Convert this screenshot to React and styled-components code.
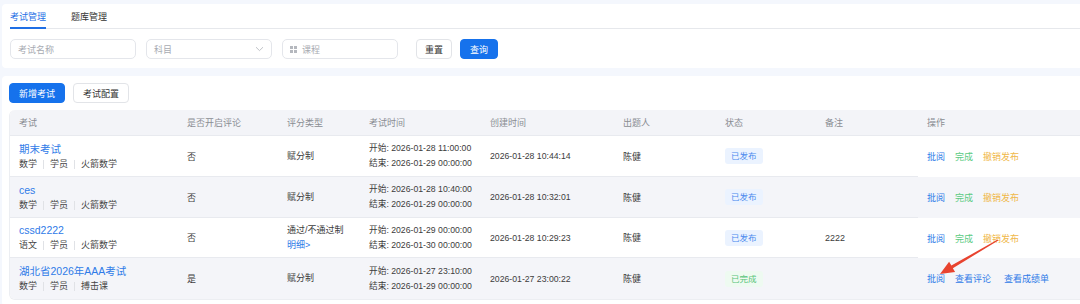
import React from 'react';
import styled, { createGlobalStyle } from 'styled-components';

const GlobalStyle = createGlobalStyle`
    body {
        margin: 0;
        background: #f4f7fd;
        overflow: hidden;
        font-family: "Liberation Sans", "Noto Sans CJK SC", sans-serif;
        color: #333;
    }
`;

const Page = styled.div`
    position: relative;
    width: 1110px;
    padding: 4px 0 0 2px;
`;

const Card = styled.div`
    background: #fff;
    border-radius: 4px;
    padding: ${props => props.pad};
    margin-bottom: 8px;
`;

const Tabs = styled.div`
    display: flex;
    gap: 25px;
    border-bottom: 1px solid #e6e8ec;
`;

const Tab = styled.div`
    height: 25px;
    line-height: 25px;
    font-size: 9px;
    color: ${props => props.active ? '#1f6fe5' : '#333'};
    border-bottom: 2px solid ${props => props.active ? '#1f6fe5' : 'transparent'};
    box-sizing: border-box;
    padding-top: 1px;
    margin-bottom: -1px;
`;

const FilterRow = styled.div`
    display: flex;
    align-items: center;
    padding-top: 10px;
`;

const Field = styled.div`
    width: ${props => props.w}px;
    height: 20px;
    box-sizing: border-box;
    border: 1px solid #e4e6eb;
    border-radius: 5px;
    margin-right: ${props => props.mr || 10}px;
    display: flex;
    align-items: center;
    padding: 0 7px;
    gap: 5px;
    font-size: 9px;
    color: #a8abb2;
`;

const Grow = styled.span`
    flex: 1;
`;

const Button = styled.button`
    height: 20px;
    box-sizing: border-box;
    padding: 0 ${props => props.px || 8}px;
    border-radius: 4px;
    font-family: inherit;
    font-size: 9px;
    border: 1px solid ${props => props.primary ? '#1672ec' : '#e2e4e8'};
    background: ${props => props.primary ? '#1672ec' : '#fff'};
    color: ${props => props.primary ? '#fff' : '#333'};
    margin-right: ${props => props.mr || 0}px;
`;

const ButtonRow = styled.div`
    display: flex;
    gap: 8px;
    margin-bottom: 7px;
`;

const Table = styled.div`
    border: 1px solid #eceef2;
    border-top: none;
    border-radius: 6px;
    overflow: hidden;
    width: 1200px;
`;

const cols = '168px 100px 82px 121px 133px 102px 100px 102px 1fr';

const HeadRow = styled.div`
    display: grid;
    grid-template-columns: ${cols};
    height: 25px;
    background: #f3f4f8;
    border-bottom: 1px solid #e8eaef;
    font-size: 9px;
    color: #8a8d93;
    align-items: center;
`;

const Row = styled.div`
    display: grid;
    grid-template-columns: ${cols};
    height: ${props => props.h}px;
    background: ${props => props.alt ? '#f4f5f9' : '#fff'};
`;

const Cell = styled.div`
    padding-left: 9px;
    display: flex;
    flex-direction: column;
    justify-content: center;
    font-size: 9px;
    color: #3c3c3c;
    box-sizing: border-box;
    border-bottom: ${props => props.fixed || props.last ? 'none' : '1px solid #e8eaef'};
`;

const HeadCell = styled.div`
    padding-left: 9px;
`;

const Title = styled.div`
    font-size: 10.5px;
    color: #2f7be8;
    line-height: 16px;
`;

const Meta = styled.div`
    display: flex;
    align-items: center;
    font-size: 9px;
    color: #444;
    line-height: 15px;
`;

const Sep = styled.span`
    width: 1px;
    height: 9px;
    background: #e0e2e6;
    margin: 0 6px;
`;

const Line = styled.div`
    line-height: 15px;
    font-size: ${props => props.small ? 8.7 : 9}px;
    color: ${props => props.link ? '#2f7be8' : '#3c3c3c'};
`;

const Stamp = styled.span`
    font-size: 8.7px;
`;

const Tag = styled.span`
    align-self: flex-start;
    height: 16px;
    line-height: 16px;
    padding: 0 6px;
    border-radius: 3px;
    font-size: 8.5px;
    background: ${props => props.done ? '#eefaf1' : '#ebf3ff'};
    color: ${props => props.done ? '#58c47a' : '#4a89ee'};
`;

const Ops = styled.div`
    display: flex;
    gap: 10px;
    font-size: 9px;
`;

const Op = styled.span`
    color: ${props => ({ blue: '#2f7be8', green: '#5ccb83', orange: '#f0b84a' })[props.tone]};
    margin-right: ${props => props.extra || 0}px;
`;

const Overlay = styled.svg`
    position: absolute;
    left: 930px;
    top: 230px;
    pointer-events: none;
`;

function GridIcon() {
    return (
        <svg width="7" height="7" viewBox="0 0 7 7">
            <rect x="0" y="0" width="3" height="3" fill="#b5b8be" />
            <rect x="4" y="0" width="3" height="3" fill="#b5b8be" />
            <rect x="0" y="4" width="3" height="3" fill="#b5b8be" />
            <rect x="4" y="4" width="3" height="3" fill="#b5b8be" />
        </svg>
    );
}

function Chevron() {
    return (
        <svg width="9" height="6" viewBox="0 0 9 6">
            <path d="M1 1.2 L4.5 4.6 L8 1.2" fill="none" stroke="#b8bbc1" strokeWidth="0.9" />
        </svg>
    );
}

const rows = [
    {
        title: '期末考试', meta: ['数学', '学员', '火箭数学'], comment: '否', score: ['赋分制'],
        start: '2026-01-28 11:00:00', end: '2026-01-29 00:00:00', created: '2026-01-28 10:44:14',
        author: '陈健', status: '已发布', note: '', h: 41,
    },
    {
        title: 'ces', meta: ['数学', '学员', '火箭数学'], comment: '否', score: ['赋分制'],
        start: '2026-01-28 10:40:00', end: '2026-01-29 00:00:00', created: '2026-01-28 10:32:01',
        author: '陈健', status: '已发布', note: '', h: 41,
    },
    {
        title: 'cssd2222', meta: ['语文', '学员', '火箭数学'], comment: '否', score: ['通过/不通过制', '明细>'],
        start: '2026-01-29 00:00:00', end: '2026-01-30 00:00:00', created: '2026-01-28 10:29:23',
        author: '陈健', status: '已发布', note: '2222', h: 40,
    },
    {
        title: '湖北省2026年AAA考试', meta: ['数学', '学员', '搏击课'], comment: '是', score: ['赋分制'],
        start: '2026-01-27 23:10:00', end: '2026-01-29 00:00:00', created: '2026-01-27 23:00:22',
        author: '陈健', status: '已完成', note: '', h: 41, done: true,
    },
];

function MetaLine({ items }) {
    return (
        <Meta>
            {items.map((m, i) => (
                <React.Fragment key={m}>
                    {i > 0 && <Sep />}
                    <span>{m}</span>
                </React.Fragment>
            ))}
        </Meta>
    );
}

export default function App() {
    return (
        <Page>
            <GlobalStyle />
            <Card pad="0 0 9px 8px">
                <Tabs>
                    <Tab active>考试管理</Tab>
                    <Tab>题库管理</Tab>
                </Tabs>
                <FilterRow>
                    <Field w={126}>考试名称</Field>
                    <Field w={126}><Grow>科目</Grow><Chevron /></Field>
                    <Field w={116} mr={18}><GridIcon />课程</Field>
                    <Button px={8} mr={8}>重置</Button>
                    <Button primary px={9}>查询</Button>
                </FilterRow>
            </Card>
            <Card pad="7px 0 6px 7px">
                <ButtonRow>
                    <Button primary px={9}>新增考试</Button>
                    <Button px={9}>考试配置</Button>
                </ButtonRow>
                <Table>
                    <HeadRow>
                        <HeadCell>考试</HeadCell>
                        <HeadCell>是否开启评论</HeadCell>
                        <HeadCell>评分类型</HeadCell>
                        <HeadCell>考试时间</HeadCell>
                        <HeadCell>创建时间</HeadCell>
                        <HeadCell>出题人</HeadCell>
                        <HeadCell>状态</HeadCell>
                        <HeadCell>备注</HeadCell>
                        <HeadCell>操作</HeadCell>
                    </HeadRow>
                    {rows.map((r, i) => {
                        const last = i === rows.length - 1;
                        return (
                            <Row key={r.title} h={r.h} alt={i % 2 === 1}>
                                <Cell last={last}>
                                    <Title>{r.title}</Title>
                                    <MetaLine items={r.meta} />
                                </Cell>
                                <Cell last={last}>{r.comment}</Cell>
                                <Cell last={last}>
                                    {r.score.map((s, k) => <Line key={s} link={k > 0}>{s}</Line>)}
                                </Cell>
                                <Cell last={last}>
                                    <Line small>开始: {r.start}</Line>
                                    <Line small>结束: {r.end}</Line>
                                </Cell>
                                <Cell last={last}><Stamp>{r.created}</Stamp></Cell>
                                <Cell last={last}>{r.author}</Cell>
                                <Cell last={last}><Tag done={r.done}>{r.status}</Tag></Cell>
                                <Cell last={last}>{r.note}</Cell>
                                <Cell fixed>
                                    {r.done ? (
                                        <Ops>
                                            <Op tone="blue">批阅</Op>
                                            <Op tone="blue" extra={3}>查看评论</Op>
                                            <Op tone="blue">查看成绩单</Op>
                                        </Ops>
                                    ) : (
                                        <Ops>
                                            <Op tone="blue">批阅</Op>
                                            <Op tone="green">完成</Op>
                                            <Op tone="orange">撤销发布</Op>
                                        </Ops>
                                    )}
                                </Cell>
                            </Row>
                        );
                    })}
                </Table>
            </Card>
            <Overlay width="80" height="55" viewBox="0 0 80 55">
                <polygon
                    points="67.75,9.57 21.34,35.6 19.1,31.7 10,44 25.1,42.1 22.86,38.2 68.25,10.43"
                    fill="#e8432f"
                />
            </Overlay>
        </Page>
    );
}
